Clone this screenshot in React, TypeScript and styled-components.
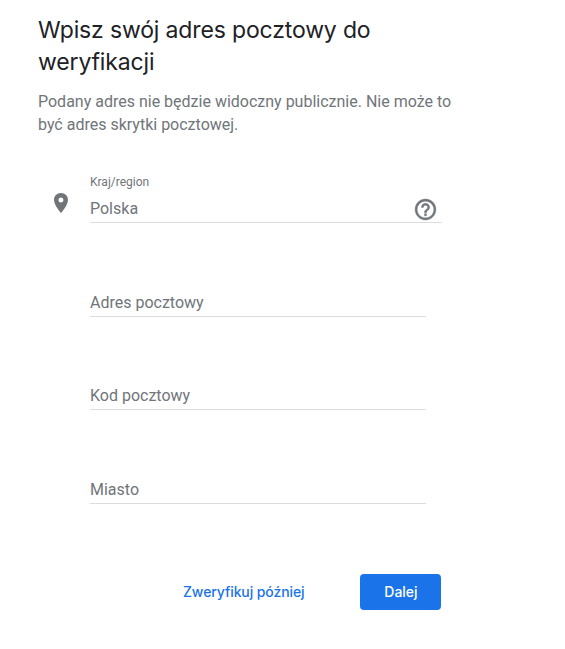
import styled, { createGlobalStyle } from 'styled-components';

const GlobalStyle = createGlobalStyle`
  body {
    margin: 0;
    background: #fff;
    font-family: Roboto, "Liberation Sans", sans-serif;
  }
`;

export default function App() {
  return (
    <Page>
      <GlobalStyle />
      <Title>Wpisz swój adres pocztowy do weryfikacji</Title>
      <Intro>Podany adres nie będzie widoczny publicznie. Nie może to być adres skrytki pocztowej.</Intro>
      <Form>
        <CountryRow>
          <PinIcon viewBox="0 0 24 24">
            <path d="M12 2C7.8 2 5 5.2 5 9c0 5.2 7 13 7 13s7-7.800 7-13c0-3.800-2.800-7-7-7zm0 9.500a2.500 2.500 0 1 1 0-5 2.500 2.500 0 0 1 0 5z" />
          </PinIcon>
          <CountryField>
            <SmallLabel>Kraj/region</SmallLabel>
            <CountryValue>
              <span>Polska</span>
              <HelpIcon viewBox="0 0 24 24">
                <path d="M11 18h2v-2h-2v2zm1-16C6.480 2 2 6.480 2 12s4.480 10 10 10 10-4.480 10-10S17.520 2 12 2zm0 18c-4.410 0-8-3.590-8-8s3.590-8 8-8 8 3.590 8 8-3.590 8-8 8zm0-14c-2.210 0-4 1.790-4 4h2c0-1.100.9-2 2-2s2 .9 2 2c0 2-3 1.750-3 5h2c0-2.250 3-2.500 3-5 0-2.210-1.790-4-4-4z" />
              </HelpIcon>
            </CountryValue>
          </CountryField>
        </CountryRow>
        <Field>Adres pocztowy</Field>
        <Field>Kod pocztowy</Field>
        <Field>Miasto</Field>
      </Form>
      <Actions>
        <LaterButton>Zweryfikuj później</LaterButton>
        <NextButton>Dalej</NextButton>
      </Actions>
    </Page>
  );
}

const Page = styled.div`
  width: 565px;
  height: 649px;
  box-sizing: border-box;
  padding: 14px 0 0 38px;
  overflow: hidden;
`;

const Title = styled.h1`
  width: 380px;
  margin: 0;
  font-family: Inter, sans-serif;
  font-size: 23px;
  font-weight: 400;
  letter-spacing: -0.15px;
  line-height: 32px;
  color: #202124;
`;

const Intro = styled.p`
  width: 420px;
  margin: 12px 0 0;
  font-size: 16px;
  line-height: 23px;
  color: #70757a;
`;

const Form = styled.div`
  display: flex;
  flex-direction: column;
  margin-top: 39px;
`;

const CountryRow = styled.div`
  display: flex;
  align-items: flex-start;
`;

const PinIcon = styled.svg`
  width: 24px;
  height: 24px;
  margin: 16px 17px 0 11px;
  fill: #70757a;
`;

const CountryField = styled.div`
  width: 352px;
  height: 48px;
  box-sizing: border-box;
  border-bottom: 1px solid #dadce0;
`;

const SmallLabel = styled.div`
  font-size: 12px;
  line-height: 14px;
  color: #70757a;
`;

const CountryValue = styled.div`
  display: flex;
  align-items: flex-start;
  justify-content: space-between;
  margin-top: 7px;
  font-size: 16px;
  line-height: 25px;
  color: #70757a;
`;

const HelpIcon = styled.svg`
  width: 25px;
  height: 25px;
  margin: 1px 4px 0 0;
  fill: #70757a;
  stroke: #70757a;
  stroke-width: 0.4;
`;

const Field = styled.div`
  width: 336px;
  height: 26px;
  margin: 67.67px 0 0 52px;
  box-sizing: border-box;
  border-bottom: 1px solid #dadce0;
  font-size: 16px;
  line-height: 24px;
  color: #70757a;
`;

const Actions = styled.div`
  display: flex;
  align-items: center;
  margin: 70px 0 0 145px;
`;

const LaterButton = styled.button`
  border: 0;
  padding: 0 0 1px;
  background: none;
  font-family: Inter, sans-serif;
  font-size: 14px;
  font-weight: 500;
  letter-spacing: -0.1px;
  color: #1a73e8;
`;

const NextButton = styled.button`
  width: 81px;
  height: 36px;
  margin-left: 56px;
  border: 0;
  border-radius: 4px;
  background: #1a73e8;
  font-family: Inter, sans-serif;
  font-size: 14px;
  font-weight: 500;
  color: #fff;
`;
